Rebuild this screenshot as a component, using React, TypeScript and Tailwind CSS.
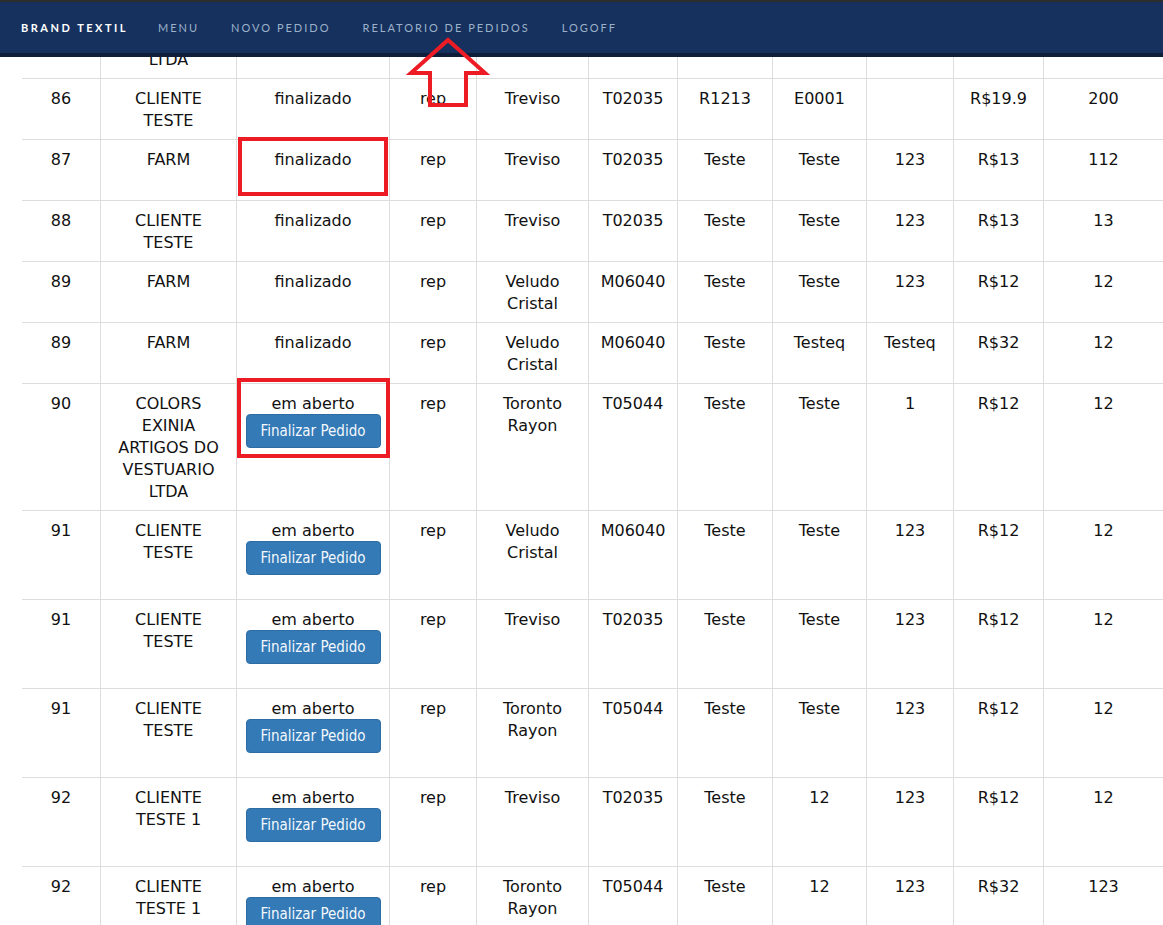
import React from "react";

type Row = {
  id: string;
  client: string[];
  status: "finalizado" | "em aberto";
  box?: 1 | 2;
  rep: string;
  fabric: string[];
  code: string;
  c7: string;
  c8: string;
  c9: string;
  price: string;
  qty: string;
};

const rows: Row[] = [
  { id: "85", client: ["COLORS", "EXINIA", "ARTIGOS DO", "VESTUARIO", "LTDA"], status: "finalizado", rep: "rep", fabric: ["Treviso"], code: "T02035", c7: "Teste", c8: "Teste", c9: "123", price: "R$12", qty: "12" },
  { id: "86", client: ["CLIENTE", "TESTE"], status: "finalizado", rep: "rep", fabric: ["Treviso"], code: "T02035", c7: "R1213", c8: "E0001", c9: "", price: "R$19.9", qty: "200" },
  { id: "87", client: ["FARM"], status: "finalizado", box: 1, rep: "rep", fabric: ["Treviso"], code: "T02035", c7: "Teste", c8: "Teste", c9: "123", price: "R$13", qty: "112" },
  { id: "88", client: ["CLIENTE", "TESTE"], status: "finalizado", rep: "rep", fabric: ["Treviso"], code: "T02035", c7: "Teste", c8: "Teste", c9: "123", price: "R$13", qty: "13" },
  { id: "89", client: ["FARM"], status: "finalizado", rep: "rep", fabric: ["Veludo", "Cristal"], code: "M06040", c7: "Teste", c8: "Teste", c9: "123", price: "R$12", qty: "12" },
  { id: "89", client: ["FARM"], status: "finalizado", rep: "rep", fabric: ["Veludo", "Cristal"], code: "M06040", c7: "Teste", c8: "Testeq", c9: "Testeq", price: "R$32", qty: "12" },
  { id: "90", client: ["COLORS", "EXINIA", "ARTIGOS DO", "VESTUARIO", "LTDA"], status: "em aberto", box: 2, rep: "rep", fabric: ["Toronto", "Rayon"], code: "T05044", c7: "Teste", c8: "Teste", c9: "1", price: "R$12", qty: "12" },
  { id: "91", client: ["CLIENTE", "TESTE"], status: "em aberto", rep: "rep", fabric: ["Veludo", "Cristal"], code: "M06040", c7: "Teste", c8: "Teste", c9: "123", price: "R$12", qty: "12" },
  { id: "91", client: ["CLIENTE", "TESTE"], status: "em aberto", rep: "rep", fabric: ["Treviso"], code: "T02035", c7: "Teste", c8: "Teste", c9: "123", price: "R$12", qty: "12" },
  { id: "91", client: ["CLIENTE", "TESTE"], status: "em aberto", rep: "rep", fabric: ["Toronto", "Rayon"], code: "T05044", c7: "Teste", c8: "Teste", c9: "123", price: "R$12", qty: "12" },
  { id: "92", client: ["CLIENTE", "TESTE 1"], status: "em aberto", rep: "rep", fabric: ["Treviso"], code: "T02035", c7: "Teste", c8: "12", c9: "123", price: "R$12", qty: "12" },
  { id: "92", client: ["CLIENTE", "TESTE 1"], status: "em aberto", rep: "rep", fabric: ["Toronto", "Rayon"], code: "T05044", c7: "Teste", c8: "12", c9: "123", price: "R$32", qty: "123" },
];

const cell = "border-l border-[#ddd] px-2 pt-[9px] pb-[7px] text-center";

function Lines({ lines }: { lines: string[] }) {
  return (
    <>
      {lines.map((l, i) => (
        <div key={i}>{l}</div>
      ))}
    </>
  );
}

function StatusCell({ row }: { row: Row }) {
  return (
    <div className={cell + " relative"}>
      <div>{row.status}</div>
      {row.status === "em aberto" ? (
        <div className="flex justify-center mb-[17px] -mt-px">
          <button
            className="w-[135px] h-[34px] rounded-[4px] bg-[#337ab7] border border-[#2e6da4] text-[#f4f8fc] text-[15px] leading-[20px]"
            style={{ fontFamily: '"DejaVu Sans Condensed", "DejaVu Sans", Verdana, sans-serif', fontStretch: "condensed" }}
          >
            Finalizar Pedido
          </button>
        </div>
      ) : (
        <div className="h-[22px]" />
      )}
      {row.box === 1 && (
        <div className="absolute left-[1px] top-[-3px] w-[150px] h-[59px] border-4 border-[#ed1c24]" />
      )}
      {row.box === 2 && (
        <div className="absolute left-0 top-[-6px] w-[153px] h-[80px] border-4 border-[#ed1c24]" />
      )}
    </div>
  );
}

export default function App() {
  return (
    <div
      className="relative w-full h-[925px] overflow-hidden bg-white text-[#111] text-[16px] leading-[22px]"
      style={{ fontFamily: '"DejaVu Sans", Verdana, sans-serif' }}
    >
      <nav
        className="relative z-10 h-[57px] bg-[#16315e] border-t-2 border-t-[#2d2d2d] border-b-4 border-b-[#0f1f3b] flex items-center pl-[21px] gap-[32px] text-[11px] tracking-[2px] uppercase"
        style={{ fontFamily: 'Lato, "Open Sans", sans-serif' }}
      >
        <span className="font-bold text-white tracking-[2.5px] -mr-[2px]">Brand Textil</span>
        <span className="text-[#9cb1c9]">Menu</span>
        <span className="text-[#9cb1c9]">Novo Pedido</span>
        <span className="text-[#9cb1c9]">Relatorio de Pedidos</span>
        <span className="text-[#9cb1c9]">Logoff</span>
      </nav>

      <div className="-mt-[106px] ml-[22px]">
        {rows.map((r, i) => (
          <div
            key={i}
            className="grid grid-cols-[78px_136px_153px_87px_112px_89px_95px_94px_87px_90px_1fr] border-t border-[#ddd]"
          >
            <div className="px-2 pt-[9px] pb-[7px] text-center">{r.id}</div>
            <div className={cell}>
              <Lines lines={r.client} />
            </div>
            <StatusCell row={r} />
            <div className={cell}>{r.rep}</div>
            <div className={cell}>
              <Lines lines={r.fabric} />
            </div>
            <div className={cell}>{r.code}</div>
            <div className={cell}>{r.c7}</div>
            <div className={cell}>{r.c8}</div>
            <div className={cell}>{r.c9}</div>
            <div className={cell}>{r.price}</div>
            <div className={cell}>{r.qty}</div>
          </div>
        ))}
      </div>

      <svg
        className="absolute left-[400px] top-[30px] z-20"
        width="100"
        height="90"
        viewBox="400 30 100 90"
        fill="none"
      >
        <polygon
          points="448,40 485,73 466,73 466,105 430,105 430,73 411,73"
          stroke="#ed1c24"
          strokeWidth="4"
          strokeLinejoin="miter"
          fill="none"
        />
      </svg>
    </div>
  );
}
